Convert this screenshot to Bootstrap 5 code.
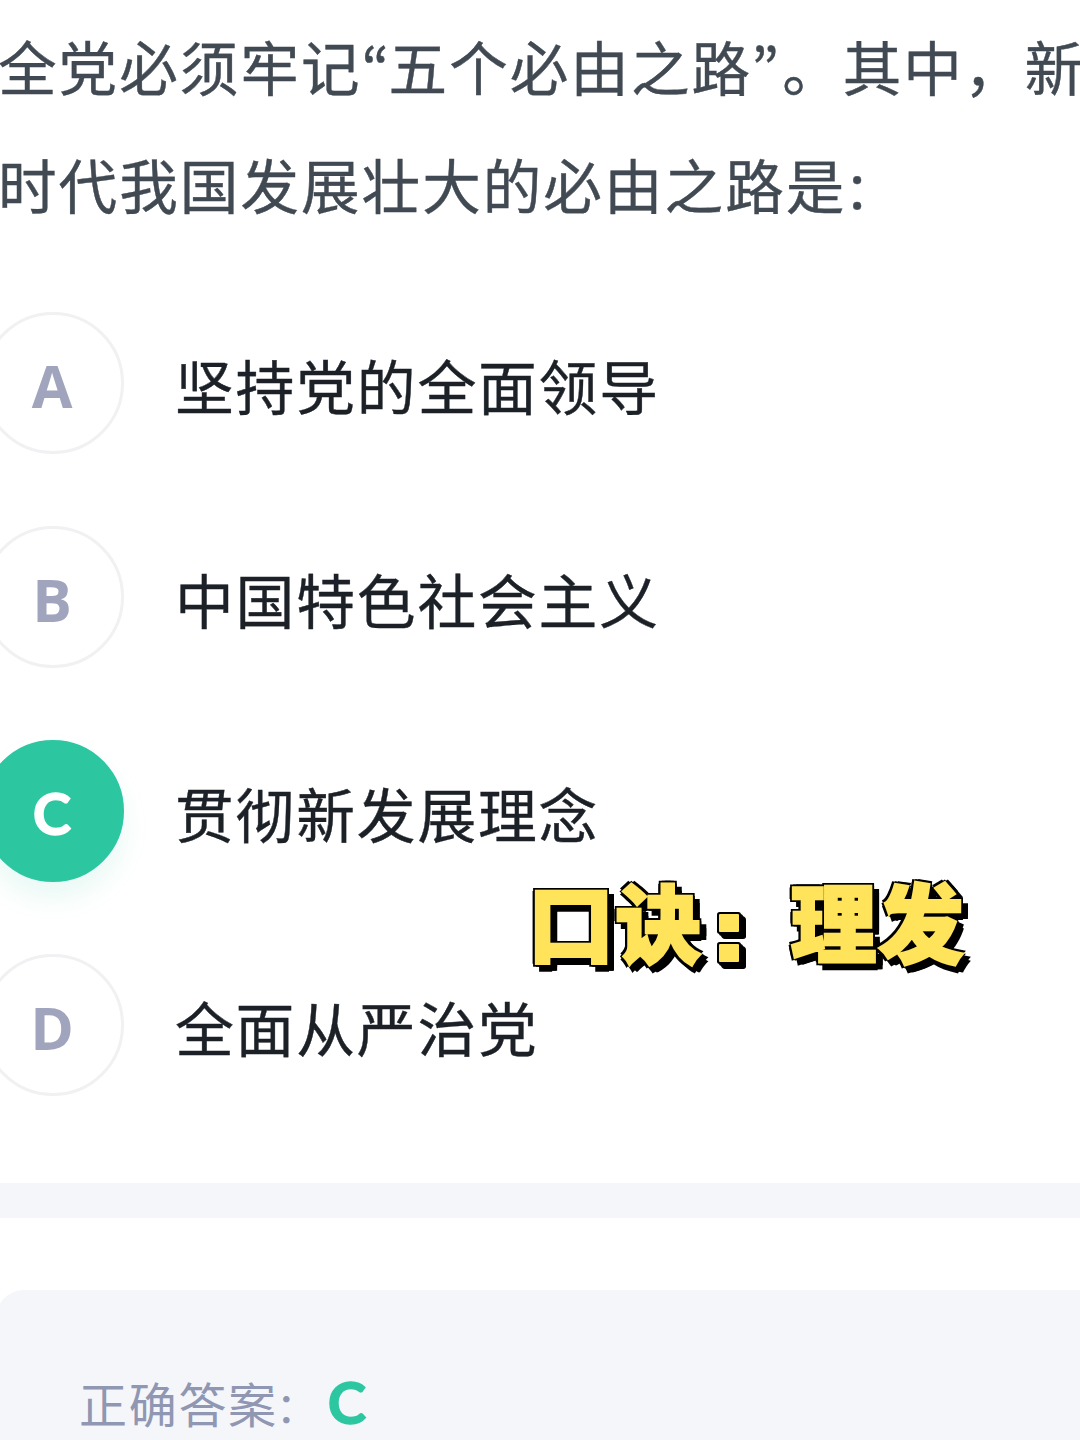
<!DOCTYPE html>
<html lang="zh-CN">
<head>
<meta charset="utf-8">
<title>答题</title>
<link href="https://cdn.jsdelivr.net/npm/bootstrap@5.3.0/dist/css/bootstrap.min.css" rel="stylesheet">
<script src="https://cdn.jsdelivr.net/npm/bootstrap@5.3.0/dist/js/bootstrap.bundle.min.js"></script>
<style>
body{width:1080px;height:1440px;font-family:"Noto Sans CJK SC",sans-serif;color:#1c2127}
.quiz{height:1183px}
.question{font-size:58.6px;letter-spacing:2px;line-height:118px;color:#414a53;margin-left:-2px;padding-top:7px;height:312px;-webkit-text-stroke:.4px #414a53}
.question-line{height:118px}
.quote-mark{display:inline-block;width:27px;line-height:1;letter-spacing:0;text-indent:0;font-family:"Noto Sans CJK KR",sans-serif}
.quote-mark.closing{width:30px;text-indent:-1px}
.small-colon{font-size:.88em;margin-left:-2px}
.options{gap:72px;margin-left:-18px}
.option-item{height:142px;gap:51px}
.option-text{font-size:58.8px;letter-spacing:1.8px;line-height:1;padding-top:5px;-webkit-text-stroke:.4px #1c2127}
.option-key{width:142px;height:142px;border:3px solid #f1f1f3;font:700 59px/1 "Open Sans",sans-serif;color:#a0a5bd;padding:4px 2px 0 0}
.option-key.correct{background:#2cc7a1;border-color:#2cc7a1;color:#fff;font:700 58px/1 Lato,sans-serif;padding-top:4px;-webkit-text-stroke:1.4px #fff;box-shadow:0 16px 26px rgba(44,199,161,.1)}
.divider{height:35px;background:#f5f6fa}
.answer-panel{height:150px;margin:72px 0 0 -4px;padding:87px 0 0 83px;background:#f5f6fa;border-top-left-radius:28px;font-size:48px;letter-spacing:1.7px;line-height:50px;color:#9097b2}
.answer-key{font:700 58px/50px Lato,sans-serif;letter-spacing:0;color:#2cc7a1;-webkit-text-stroke:1.4px #2cc7a1;padding-left:4px}
.tip{left:528px;top:857px;font-size:86px;letter-spacing:1.5px;line-height:126px;font-weight:900;color:#ffe35a}
.tip-char{-webkit-text-stroke:2.4px #ffe35a;text-shadow:-3px -3px #000,0 -3.5px #000,3px -3px #000,-3.5px 0 #000,-3px 3px #000,0 3px #000,3px 0 #000,3px 3px #000,4px 4px #000,5px 5px #000,6px 6px #000,7px 7px #000,8px 7px #000,8px 3px #000,3px 8px #000}
.tip-colon{color:transparent}
.tip-colon::before,.tip-colon::after{content:"";position:absolute;left:16px;width:20px;height:18px;background:#ffe35a;border-radius:1px;box-shadow:0 0 0 2px #000,2px 2px 0 2px #000,4px 4px 0 2px #000,5px 5px 0 2px #000}
.tip-colon::before{top:57px}
.tip-colon::after{top:87px}
</style>
</head>
<body class="bg-white overflow-hidden position-relative">
<main class="quiz">
  <div class="question text-nowrap">
    <div class="question-line">全党必须牢记<span class="quote-mark">“</span>五个必由之路<span class="quote-mark closing">”</span>。其中，新</div>
    <div class="question-line">时代我国发展壮大的必由之路是<span class="small-colon">：</span></div>
  </div>
  <div class="options d-flex flex-column">
    <div class="option-item d-flex align-items-center"><span class="option-key rounded-circle d-flex align-items-center justify-content-center">A</span><span class="option-text">坚持党的全面领导</span></div>
    <div class="option-item d-flex align-items-center"><span class="option-key rounded-circle d-flex align-items-center justify-content-center">B</span><span class="option-text">中国特色社会主义</span></div>
    <div class="option-item d-flex align-items-center"><span class="option-key correct rounded-circle d-flex align-items-center justify-content-center">C</span><span class="option-text">贯彻新发展理念</span></div>
    <div class="option-item d-flex align-items-center"><span class="option-key rounded-circle d-flex align-items-center justify-content-center">D</span><span class="option-text">全面从严治党</span></div>
  </div>
</main>
<div class="divider"></div>
<section class="answer-panel d-flex text-nowrap"><span>正确答案<span class="small-colon">：</span></span><span class="answer-key ms-1">C</span></section>
<div class="tip position-absolute d-flex text-nowrap"><span class="tip-char">口</span><span class="tip-char">诀</span><span class="tip-colon position-relative">：</span><span class="tip-char">理</span><span class="tip-char">发</span></div>
</body>
</html>
